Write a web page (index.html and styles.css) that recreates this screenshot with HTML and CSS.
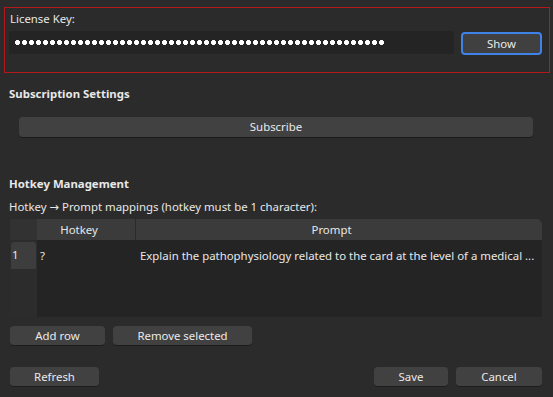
FILE: index.html
```html
<!DOCTYPE html>
<html>
<head>
<meta charset="utf-8">
<link rel="stylesheet" href="styles.css">
</head>
<body>
<div class="page">
  <section class="license">
    <div class="label">License Key:</div>
    <div class="key-row">
      <div class="field"><span class="dots" aria-label="masked license key"></span></div>
      <button class="btn focus show">Show</button>
    </div>
  </section>

  <h2 class="heading sub-heading">Subscription Settings</h2>
  <div class="sub-row"><button class="btn wide">Subscribe</button></div>

  <h2 class="heading hk-heading">Hotkey Management</h2>
  <div class="caption">Hotkey → Prompt mappings (hotkey must be 1 character):</div>

  <div class="table">
    <div class="corner"></div>
    <div class="th th-hotkey">Hotkey</div>
    <div class="th th-prompt">Prompt</div>
    <div class="rh"><span class="rh-cell">1</span></div>
    <div class="td td-hotkey">?</div>
    <div class="td td-prompt">Explain the pathophysiology related to the card at the level of a medical ...</div>
    <div class="rh-fill"></div>
    <div class="body-fill"></div>
  </div>

  <div class="row-actions">
    <button class="btn add">Add row</button>
    <button class="btn remove">Remove selected</button>
  </div>

  <div class="footer">
    <button class="btn refresh">Refresh</button>
    <div class="spacer"></div>
    <button class="btn save">Save</button>
    <button class="btn cancel">Cancel</button>
  </div>
</div>
</body>
</html>
```
FILE: styles.css
```css
* { box-sizing: border-box; }
html, body {
  margin: 0;
  padding: 0;
  background: #2b2b2b;
}
body {
  width: 553px;
  height: 397px;
  overflow: hidden;
  font-family: "Noto Sans", "DejaVu Sans", sans-serif;
  font-size: 11.4px;
  line-height: 16px;
  color: #e8e8e8;
}
.page {
  padding: 7px 0 0 0;
}
.license {
  margin-left: 4px;
  width: 546px;
  height: 66px;
  border: 1px solid #b3191c;
  padding: 3px 7px 0 4px;
}
.label {
  padding-left: 1px;
}
.key-row {
  display: flex;
  align-items: flex-start;
  gap: 7px;
  margin-top: 4px;
}
.field {
  width: 445px;
  height: 23px;
  background: #242424;
  border-radius: 3px;
  display: flex;
  align-items: center;
  padding-left: 6px;
}
.dots {
  display: block;
  width: 371px;
  height: 5px;
  background-image: radial-gradient(circle at 2.5px 2.5px, #ffffff 2.2px, transparent 2.8px);
  background-size: 7px 5px;
  background-repeat: repeat-x;
}
.btn {
  font-family: inherit;
  font-size: 11.4px;
  line-height: 16px;
  color: #eaeaea;
  background: #414141;
  border: none;
  border-bottom: 1px solid #1c1c1c;
  border-radius: 4px;
  height: 20px;
  padding: 0;
  margin: 0;
}
.btn.focus {
  border: 2px solid #3f82e8;
  background: #404040;
  border-radius: 4px;
}
.show {
  width: 81px;
  height: 23px;
  margin-top: 1px;
}
.heading {
  margin: 0;
  font-size: 11.4px;
  font-weight: bold;
  line-height: 16px;
  padding-left: 9px;
}
.sub-heading {
  margin-top: 13px;
}
.sub-row {
  padding: 15px 0 0 19px;
}
.wide {
  width: 514px;
  height: 21px;
}
.hk-heading {
  margin-top: 38px;
}
.caption {
  margin-top: 7px;
  padding-left: 9px;
}
.table {
  margin: 4px 0 0 10px;
  width: 532px;
  height: 98px;
  display: grid;
  grid-template-columns: 27px 99px 1fr;
  grid-template-rows: 21px 29px 1fr;
  background: #242424;
  border-top-right-radius: 5px;
  overflow: hidden;
}
.corner {
  background: #323232;
}
.th {
  background: #3b3b3b;
  text-align: center;
  line-height: 21px;
}
.th-hotkey {
  border-right: 1px solid #2a2a2a;
  padding-right: 14px;
}
.th-prompt {
  padding-right: 15px;
}
.rh {
  background: #2c2c2c;
  padding: 2px 1px 0 1px;
}
.rh-cell {
  display: block;
  height: 27px;
  background: #3d3d3d;
  border-radius: 3px 3px 0 0;
  line-height: 26px;
  padding-left: 1px;
}
.td {
  line-height: 32px;
  white-space: nowrap;
}
.td-hotkey {
  padding-left: 3px;
}
.td-prompt {
  padding-left: 4px;
}
.rh-fill {
  background: #2c2c2c;
}
.body-fill {
  grid-column: 2 / 4;
}
.row-actions {
  display: flex;
  gap: 8px;
  margin: 9px 0 0 10px;
}
.add { width: 95px; }
.remove { width: 139px; }
.footer {
  display: flex;
  margin: 21px 11px 0 10px;
}
.spacer { flex: 1; }
.refresh { width: 89px; }
.save { width: 74px; margin-right: 8px; }
.cancel { width: 86px; }
```
